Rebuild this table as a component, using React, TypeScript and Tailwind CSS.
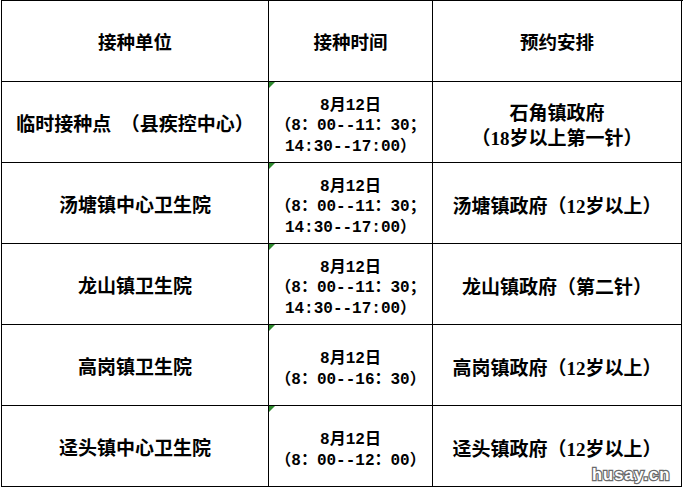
import React from 'react';

interface Row {
  unit: string;
  time: string[];
  plan: string[];
}

const rows: Row[] = [
  {
    unit: '临时接种点  （县疾控中心）',
    time: ['8月12日', '（8：00--11：30；', '14:30--17:00）'],
    plan: ['石角镇政府', '（18岁以上第一针）'],
  },
  {
    unit: '汤塘镇中心卫生院',
    time: ['8月12日', '（8：00--11：30；', '14:30--17:00）'],
    plan: ['汤塘镇政府（12岁以上）'],
  },
  {
    unit: '龙山镇卫生院',
    time: ['8月12日', '（8：00--11：30；', '14:30--17:00）'],
    plan: ['龙山镇政府（第二针）'],
  },
  {
    unit: '高岗镇卫生院',
    time: ['8月12日', '（8：00--16：30）'],
    plan: ['高岗镇政府（12岁以上）'],
  },
  {
    unit: '迳头镇中心卫生院',
    time: ['8月12日', '（8：00--12：00）'],
    plan: ['迳头镇政府（12岁以上）'],
  },
];

// little green "number stored as text" marker in the corner of the time cells
const TextMarker = () => (
  <svg className="absolute left-0 top-0" width="6" height="6" viewBox="0 0 6 6">
    <polygon points="0,0 6,0 0,6" fill="#2f8a2f" />
  </svg>
);

const cell = 'relative flex flex-col items-center justify-center text-center border-r border-b border-black';

export default function App() {
  return (
    <div
      className="relative w-[683px] h-[489px] bg-white text-black overflow-hidden"
      style={{ fontFamily: '"Liberation Serif", "Noto Sans CJK SC", serif' }}
    >
      <div className="ml-[1px] grid grid-cols-[267px_164px_249px] auto-rows-[81px] border-l border-t border-black font-bold">
        {/* Header */}
        <div className={`${cell} pt-[5px] text-[18.5px]`}>接种单位</div>
        <div className={`${cell} pt-[5px] text-[18.5px]`}>接种时间</div>
        <div className={`${cell} pt-[5px] text-[18.5px]`}>预约安排</div>

        {rows.map((row) => (
          <React.Fragment key={row.unit}>
            <div className={`${cell} pt-[7px] text-[19px] whitespace-pre`}>{row.unit}</div>
            <div
              className={`${cell} pt-[9px] text-[16px] leading-[20.5px]`}
              style={{ fontFamily: '"Liberation Mono", "Noto Sans CJK SC", monospace' }}
            >
              <TextMarker />
              {row.time.map((line) => (
                <div key={line} className="whitespace-pre">{line}</div>
              ))}
            </div>
            <div className={`${cell} pt-[9px] text-[19px] leading-[24.5px]`}>
              {row.plan.map((line) => (
                <div key={line} className="whitespace-pre">{line}</div>
              ))}
            </div>
          </React.Fragment>
        ))}
      </div>

      {/* watermark */}
      <span
        className="absolute left-[592px] top-[462px] text-[16.5px] font-bold tracking-[1px] text-white [-webkit-text-stroke:2.5px_#6a6a6a] [paint-order:stroke_fill]"
        style={{ fontFamily: '"Liberation Sans", Arial, sans-serif' }}
      >
        husay.cn
      </span>
    </div>
  );
}
